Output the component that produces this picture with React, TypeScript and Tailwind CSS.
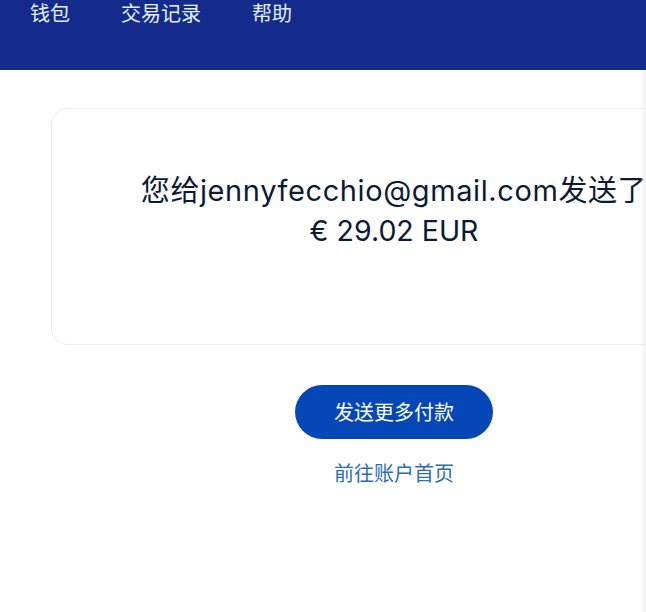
import React from "react";

const font = '"Inter", "Noto Sans CJK SC", sans-serif';

export default function App() {
  return (
    <div className="relative w-[646px] h-[612px] overflow-hidden bg-white" style={{ fontFamily: font }}>
      <header className="h-[70px] bg-[#142b8c] flex items-start gap-[51px] pl-[30px] pt-[1px]">
        {["钱包", "交易记录", "帮助"].map((t) => (
          <span key={t} className="text-[20px] leading-[24px] text-[#e3f0ff]" style={{ fontFamily: '"Noto Sans CJK SC", sans-serif' }}>
            {t}
          </span>
        ))}
      </header>
      <main className="w-[788px] px-[51px] pt-[38px] flex flex-col items-center">
        <div className="w-full h-[237px] rounded-[16px] border border-[#ececec] bg-white flex flex-col items-center pt-[62px]">
          <p className="text-[29px] leading-[40px] text-[#0b1a35] whitespace-nowrap tracking-[0.6px]">
            您给jennyfecchio@gmail.com发送了
          </p>
          <p className="text-[28.5px] leading-[40px] text-[#0b1a35] whitespace-nowrap">€ 29.02 EUR</p>
        </div>
        <button className="mt-[40px] w-[198px] h-[54px] rounded-full bg-[#0547b6] text-white text-[20px] flex items-center justify-center" style={{ fontFamily: '"Noto Sans CJK SC", sans-serif' }}>
          发送更多付款
        </button>
        <a className="mt-[19px] text-[20px] leading-[30px] text-[#2c6db6]" style={{ fontFamily: '"Noto Sans CJK SC", sans-serif' }}>
          前往账户首页
        </a>
      </main>
      <div className="absolute right-0 top-[70px] bottom-0 w-[6px] bg-gradient-to-r from-transparent to-[#f2f2f2]" />
    </div>
  );
}
